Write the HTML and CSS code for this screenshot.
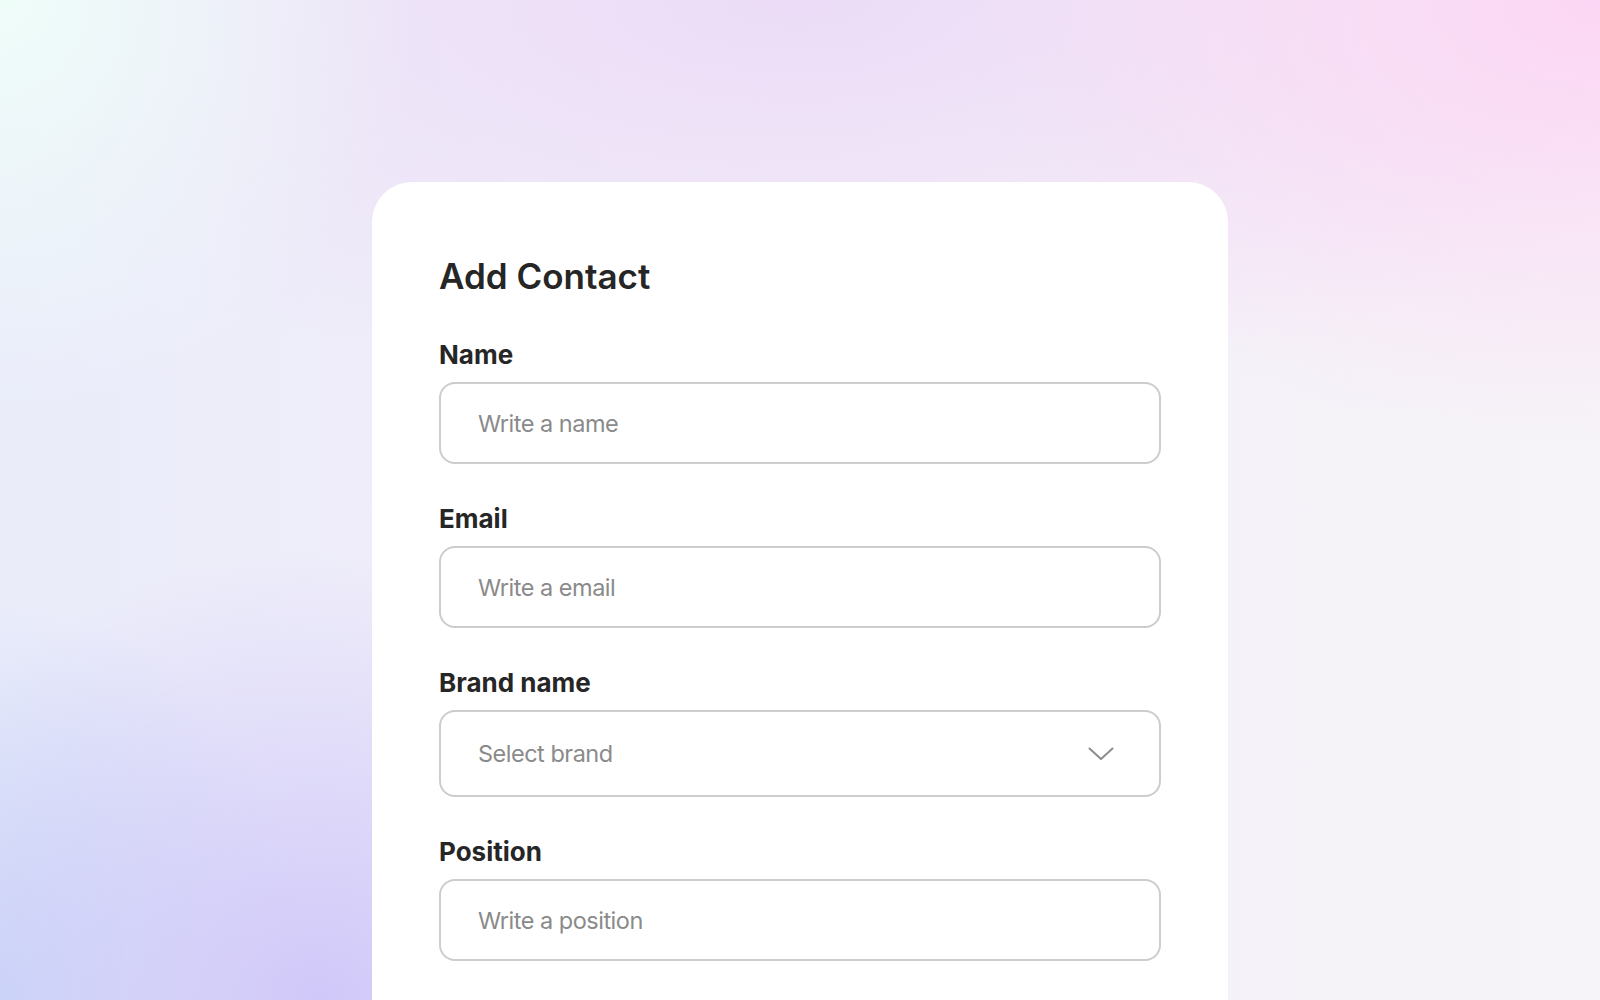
FILE: index.html
```html
<!DOCTYPE html>
<html lang="en">
<head>
<meta charset="utf-8">
<title>Add Contact</title>
<link rel="stylesheet" href="styles.css">
</head>
<body>
<main class="page">
  <section class="card">
    <h1 class="title">Add Contact</h1>
    <div class="field">
      <label class="label" for="name">Name</label>
      <input class="input" id="name" type="text" placeholder="Write a name">
    </div>
    <div class="field">
      <label class="label" for="email">Email</label>
      <input class="input" id="email" type="text" placeholder="Write a email">
    </div>
    <div class="field">
      <label class="label">Brand name</label>
      <div class="input select">
        <span class="placeholder">Select brand</span>
        <svg class="chevron" width="26" height="14" viewBox="0 0 26 14" fill="none"><path d="M1.5 1.5 L13 12 L24.5 1.5" stroke="#8c8c8c" stroke-width="2" stroke-linecap="round" stroke-linejoin="round"/></svg>
      </div>
    </div>
    <div class="field">
      <label class="label" for="position">Position</label>
      <input class="input" id="position" type="text" placeholder="Write a position">
    </div>
  </section>
</main>
</body>
</html>
```
FILE: styles.css
```css
* { box-sizing: border-box; }
html, body { margin: 0; height: 100%; }
body {
  overflow: hidden;
  font-family: Inter, "Noto Sans", sans-serif;
  background-color: #f4f2f8;
  background-image:
    radial-gradient(circle at 0% 0%, #effdf9 0%, rgba(239,253,249,0) 22%),
    radial-gradient(ellipse 40% 45% at 100% 0%, #fcd6f4 0%, rgba(252,214,244,0) 100%),
    radial-gradient(ellipse 60% 40% at 50% 0%, #ecdcf7 0%, rgba(236,220,247,0) 100%),
    radial-gradient(ellipse 30% 45% at 20% 100%, #d0c8f9 0%, rgba(208,200,249,0) 100%),
    radial-gradient(ellipse 20% 40% at 0% 100%, #c9d8f8 0%, rgba(201,216,248,0) 100%),
    linear-gradient(90deg, #eaecfa 0%, #f2eef9 40%, #f6f4f8 100%);
}
.page {
  display: flex;
  justify-content: center;
  padding-top: 182px;
  height: 100%;
}
.card {
  width: 856px;
  min-height: 900px;
  background: #ffffff;
  border-radius: 40px 40px 0 0;
  padding: 73px 67px 0 67px;
  display: flex;
  flex-direction: column;
  gap: 40px;
}
.title {
  margin: 0 0 3px 0;
  font-size: 35px;
  line-height: 42px;
  font-weight: 600;
  color: #262626;
  letter-spacing: 0;
}
.field {
  display: flex;
  flex-direction: column;
  gap: 12px;
}
.label {
  font-size: 26px;
  line-height: 30px;
  font-weight: 700;
  color: #262626;
  letter-spacing: 0;
}
.input {
  height: 82px;
  width: 100%;
  border: 2px solid #cdcdcd;
  border-radius: 16px;
  padding: 0 37px;
  font-family: Inter, "Noto Sans", sans-serif;
  font-size: 23.5px;
  color: #262626;
  letter-spacing: -0.5px;
  background: #fff;
  outline: none;
}
.input::placeholder { color: #8a8a8a; }
.select {
  height: 87px;
  display: flex;
  align-items: center;
  justify-content: space-between;
  padding-right: 45px;
}
.placeholder { color: #8a8a8a; }
.chevron { display: block; }
```
